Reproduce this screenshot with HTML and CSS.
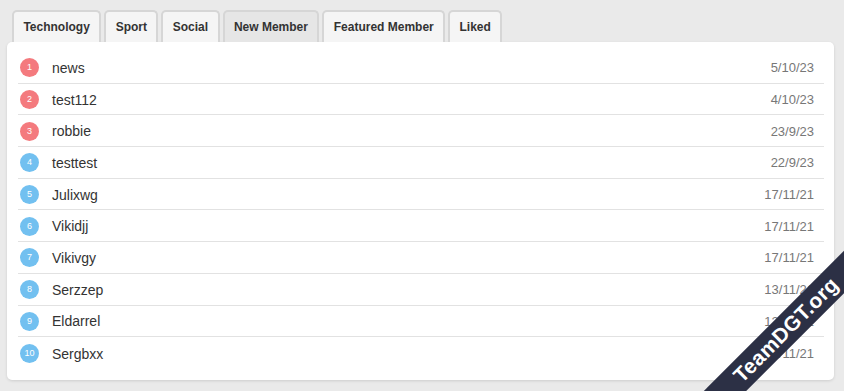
FILE: index.html
```html
<!DOCTYPE html>
<html>
<head>
<meta charset="utf-8">
<link rel="stylesheet" href="styles.css">
</head>
<body>
<div class="page">
  <div class="tabs">
    <div class="tab">Technology</div>
    <div class="tab">Sport</div>
    <div class="tab">Social</div>
    <div class="tab active">New Member</div>
    <div class="tab">Featured Member</div>
    <div class="tab">Liked</div>
  </div>
  <div class="panel">
    <ul class="list">
      <li class="row"><span class="badge hot">1</span><span class="name">news</span><span class="date">5/10/23</span></li>
      <li class="row"><span class="badge hot">2</span><span class="name">test112</span><span class="date">4/10/23</span></li>
      <li class="row"><span class="badge hot">3</span><span class="name">robbie</span><span class="date">23/9/23</span></li>
      <li class="row"><span class="badge">4</span><span class="name">testtest</span><span class="date">22/9/23</span></li>
      <li class="row"><span class="badge">5</span><span class="name">Julixwg</span><span class="date">17/11/21</span></li>
      <li class="row"><span class="badge">6</span><span class="name">Vikidjj</span><span class="date">17/11/21</span></li>
      <li class="row"><span class="badge">7</span><span class="name">Vikivgy</span><span class="date">17/11/21</span></li>
      <li class="row"><span class="badge">8</span><span class="name">Serzzep</span><span class="date">13/11/21</span></li>
      <li class="row"><span class="badge">9</span><span class="name">Eldarrel</span><span class="date">12/11/21</span></li>
      <li class="row"><span class="badge">10</span><span class="name">Sergbxx</span><span class="date">17/11/21</span></li>
    </ul>
  </div>
</div>
<div class="overlay"><div class="ribbon">TeamDGT.org</div></div>
</body>
</html>
```
FILE: styles.css
```css
html, body {
  margin: 0;
  padding: 0;
  background: #eaeaea;
  font-family: "Liberation Sans", Arial, sans-serif;
  overflow: hidden;
  width: 844px;
  height: 391px;
}
.page {
  padding: 10px 10px 0 7px;
}
.tabs {
  display: flex;
  gap: 3px;
  padding-left: 5px;
  height: 32px;
}
.tab {
  box-sizing: border-box;
  height: 32px;
  padding: 0 9.4px;
  border: 2px solid #d6d6d6;
  border-bottom: none;
  border-radius: 5px 5px 0 0;
  background: #f5f5f5;
  color: #333;
  font-weight: bold;
  font-size: 12px;
  line-height: 31px;
}
.tab.active {
  background: #e6e6e6;
}
.panel {
  background: #fff;
  border-radius: 5px;
  box-shadow: 0 1px 3px rgba(0,0,0,0.12);
  padding: 10px 10px 11px 11px;
}
.list {
  list-style: none;
  margin: 0;
  padding: 0;
}
.row {
  box-sizing: border-box;
  height: 31.7px;
  display: flex;
  align-items: center;
  padding: 1px 10px 0 2px;
  border-bottom: 1px solid #e2e2e2;
}
.row:last-child {
  border-bottom: none;
}
.badge {
  width: 19px;
  height: 19px;
  border-radius: 50%;
  background: #72c0f0;
  color: #fff;
  font-size: 9px;
  line-height: 19px;
  text-align: center;
  flex: none;
}
.badge.hot {
  background: #f47a7e;
}
.name {
  margin-left: 13px;
  font-size: 14px;
  color: #333;
  flex: 1;
}
.date {
  font-size: 13px;
  color: #777;
}
.overlay {
  position: fixed;
  left: 0;
  top: 0;
  width: 844px;
  height: 391px;
  overflow: hidden;
  pointer-events: none;
}
.ribbon {
  position: absolute;
  left: 656px;
  top: 315px;
  width: 260px;
  height: 30px;
  transform: rotate(-45deg);
  background: #2c3045;
  color: #fff;
  font-weight: bold;
  font-size: 21px;
  line-height: 30px;
  text-align: center;
  letter-spacing: 0.3px;
}
```
